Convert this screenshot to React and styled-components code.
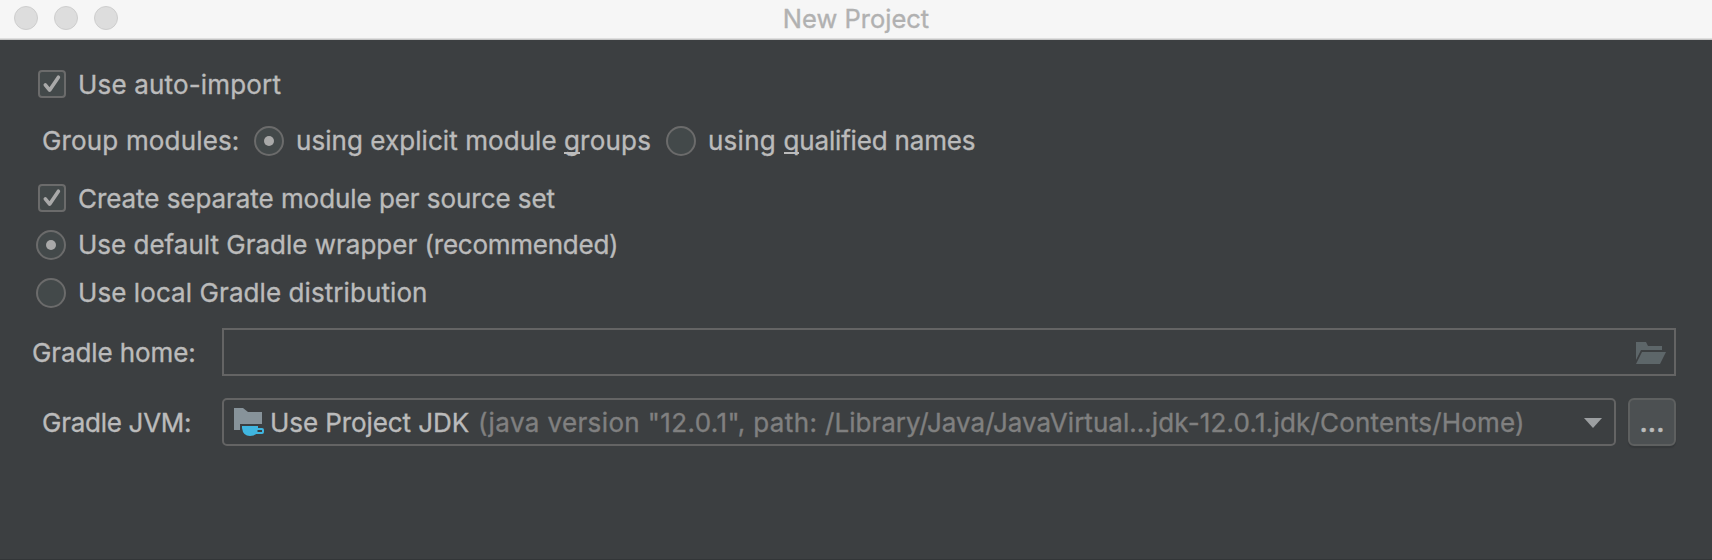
import React from "react";
import styled, { createGlobalStyle } from "styled-components";

const Global = createGlobalStyle`
  * { box-sizing: border-box; }
  body { margin: 0; background: #3c3f41; }
`;

const Window = styled.main`
  width: 1712px;
  height: 560px;
  background: #3c3f41;
  border-bottom: 1px solid #333638;
  font-family: Inter, "Noto Sans", sans-serif;
  font-size: 26px;
  line-height: 30px;
  color: #bbbbbb;
  -webkit-text-stroke-width: 0.35px;
  white-space: pre;
`;

const TitleBar = styled.header`
  display: grid;
  grid-template-columns: 1fr auto 1fr;
  height: 40px;
  padding: 0 14px;
  background: #f6f6f6;
  border-bottom: 1px solid #c4c4c4;
  box-shadow: inset 0 -1px #dedede;
`;

const Lights = styled.div`
  display: flex;
  gap: 16px;
  padding-top: 6px;
`;

const Light = styled.span`
  width: 24px;
  height: 24px;
  border: 1px solid #cecece;
  border-radius: 50%;
  background: #dddddd;
`;

const Title = styled.h1`
  margin: 0;
  padding-top: 4px;
  font-size: 25.5px;
  font-weight: 400;
  letter-spacing: 0;
  color: #b1b1b1;
`;

const Form = styled.form`
  display: flex;
  flex-direction: column;
  padding: 30px 36px 0 32px;
`;

const Row = styled.div`
  display: flex;
  height: 30px;
  margin-top: ${(p) => p.$top || 0}px;
  padding-left: ${(p) => p.$indent || 0}px;
`;

const Option = styled.label`
  display: flex;
  align-items: flex-start;
  width: ${(p) => (p.$width ? `${p.$width}px` : "auto")};
`;

const Text = styled.span`
  letter-spacing: ${(p) => p.$track || 0}px;
`;

const Mnemonic = styled.span`
  box-shadow: inset 0 -2px #bbbbbb;
  display: inline-block;
  height: 28px;
`;

const CheckBox = styled.span`
  width: 28px;
  height: 28px;
  margin-right: 12px;
  border: 2px solid #6b6b6b;
  border-radius: 4px;
  background: #43494a;
  svg { display: block; }
`;

const Radio = styled.span`
  display: grid;
  place-items: center;
  width: 30px;
  height: 30px;
  margin-right: 12px;
  border: 2px solid #6b6b6b;
  border-radius: 50%;
  background: #43494a;
`;

const Dot = styled.span`
  width: 10px;
  height: 10px;
  border-radius: 50%;
  background: #a9a9a9;
`;

const FieldRow = styled.div`
  display: grid;
  grid-template-columns: 190px 1fr;
  height: 48px;
  margin-top: ${(p) => p.$top}px;
`;

const FieldLabel = styled.span`
  padding: 10px 0 0 ${(p) => p.$indent || 0}px;
  letter-spacing: ${(p) => p.$track || 0}px;
`;

const PathField = styled.div`
  display: flex;
  justify-content: flex-end;
  align-items: flex-start;
  padding: 12px 8px 0;
  border: 2px solid #646464;
`;

const JvmControls = styled.div`
  display: flex;
  gap: 12px;
`;

const Combo = styled.div`
  display: flex;
  flex: 1;
  align-items: flex-start;
  padding: 8px 12px 0 10px;
  border: 2px solid #646464;
  border-radius: 5px;
`;

const Selected = styled.span`
  width: 208px;
  margin-left: 6px;
  letter-spacing: -0.08px;
`;

const Detail = styled.span`
  flex: 1;
  color: #808080;
`;

const Arrow = styled.span`
  width: 18px;
  height: 10px;
  margin-top: 10px;
  background: #9c9fa1;
  clip-path: polygon(0 0, 100% 0, 50% 100%);
`;

const MoreButton = styled.button`
  width: 48px;
  height: 48px;
  padding: 2px 0 0 0;
  border: 2px solid #5e6060;
  border-radius: 6px;
  background: #4c5052;
  box-shadow: 0 2px 1px #35383a;
  font: inherit;
  font-weight: 600;
  line-height: 30px;
  color: #bbbbbb;
  letter-spacing: 0;
`;

const Check = () => (
  <CheckBox>
    <svg width="24" height="24" viewBox="0 0 24 24">
      <path d="M5.3 12.8 L9.6 18.2 L18.4 5.2" fill="none" stroke="#a9a9a9" strokeWidth="3.6" strokeLinecap="round" strokeLinejoin="round" />
    </svg>
  </CheckBox>
);

const JdkIcon = () => (
  <svg width="30" height="28" viewBox="0 0 30 28">
    <path d="M0 0h9l5 4h14v12H6v6H0z" fill="#87939a" />
    <path d="M8 18h16v2h4q2 0 2 2v2q0 2-2 2h-6q-2 2-6 2q-7 0-8-8z" fill="#40b6e0" />
    <rect x="23.5" y="22" width="4.5" height="2" fill="#3c3f41" />
  </svg>
);

const OpenFolderIcon = () => (
  <svg width="30" height="22" viewBox="0 0 30 22">
    <path d="M0 0h10l2 4h14v4H5L0 18z" fill="#5d6669" />
    <path d="M6 10h24l-6 12H0z" fill="#5d6669" />
  </svg>
);

export default function App() {
  return (
    <>
      <Global />
      <Window>
        <TitleBar>
          <Lights><Light /><Light /><Light /></Lights>
          <Title>New Project</Title>
        </TitleBar>
        <Form>
          <Row $indent={6}>
            <Option><Check /><Text $track={0.17}>Use auto-import</Text></Option>
          </Row>
          <Row $top={26} $indent={10}>
            <Option $width={212}><Text $track={0.16}>Group modules:</Text></Option>
            <Option $width={412}>
              <Radio><Dot /></Radio>
              <Text $track={0.06}>using explicit module <Mnemonic>g</Mnemonic><Text $track={0.25}>roups</Text></Text>
            </Option>
            <Option>
              <Radio />
              <Text $track={0.25}>using </Text>
              <Text $track={-0.17}><Mnemonic>q</Mnemonic>ualified names</Text>
            </Option>
          </Row>
          <Row $top={28} $indent={6}>
            <Option><Check /><Text $track={-0.06}>Create separate module per source set</Text></Option>
          </Row>
          <Row $top={16} $indent={4}>
            <Option>
              <Radio><Dot /></Radio>
              <Text>Use default Gradle wrapper </Text>
              <Text $track={-0.25}>(recommended)</Text>
            </Option>
          </Row>
          <Row $top={18} $indent={4}>
            <Option><Radio /><Text $track={0.08}>Use local Gradle distribution</Text></Option>
          </Row>
          <FieldRow $top={20}>
            <FieldLabel $track={-0.1}>Gradle home:</FieldLabel>
            <PathField><OpenFolderIcon /></PathField>
          </FieldRow>
          <FieldRow $top={22}>
            <FieldLabel $indent={10} $track={-0.27}>Gradle JVM:</FieldLabel>
            <JvmControls>
              <Combo>
                <JdkIcon />
                <Selected>Use Project JDK</Selected>
                <Detail>
                  <Text $track={0.38}>(java version "12.0.1", path: </Text>
                  <Text $track={0.02}>/Library/Java/JavaVirtual...</Text>
                  <Text $track={0.19}>jdk-12.0.1.jdk/Contents/Home)</Text>
                </Detail>
                <Arrow />
              </Combo>
              <MoreButton type="button">...</MoreButton>
            </JvmControls>
          </FieldRow>
        </Form>
      </Window>
    </>
  );
}
